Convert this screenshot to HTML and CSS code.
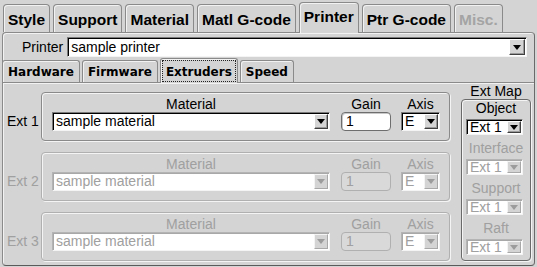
FILE: index.html
```html
<!DOCTYPE html>
<html>
<head>
<meta charset="utf-8">
<link rel="stylesheet" href="styles.css">
</head>
<body>
<div class="tabs">
  <div class="tab">Style</div>
  <div class="tab">Support</div>
  <div class="tab">Material</div>
  <div class="tab">Matl G-code</div>
  <div class="tab sel">Printer</div>
  <div class="tab">Ptr G-code</div>
  <div class="tab dis">Misc.</div>
</div>
<div class="panel">
  <div class="printer-row">
    <span class="plabel">Printer</span>
    <div class="combo wide"><span class="ctext">sample printer</span><span class="btn"><i class="tri"></i></span></div>
  </div>
  <div class="subtabs">
    <div class="stab">Hardware</div>
    <div class="stab">Firmware</div>
    <div class="stab sel"><span class="focus">Extruders</span></div>
    <div class="stab">Speed</div>
  </div>
  <div class="subpanel">
    <div class="extcol">
      <div class="extrow">
        <div class="extlabel">Ext 1</div>
        <div class="group">
          <div class="field mat"><div class="flabel">Material</div><div class="combo"><span class="ctext">sample material</span><span class="btn"><i class="tri"></i></span></div></div>
          <div class="field gain"><div class="flabel">Gain</div><div class="input">1</div></div>
          <div class="field axis"><div class="flabel">Axis</div><div class="combo"><span class="ctext">E</span><span class="btn"><i class="tri"></i></span></div></div>
        </div>
      </div>
      <div class="extrow dis">
        <div class="extlabel">Ext 2</div>
        <div class="group">
          <div class="field mat"><div class="flabel">Material</div><div class="combo"><span class="ctext">sample material</span><span class="btn"><i class="tri"></i></span></div></div>
          <div class="field gain"><div class="flabel">Gain</div><div class="input">1</div></div>
          <div class="field axis"><div class="flabel">Axis</div><div class="combo"><span class="ctext">E</span><span class="btn"><i class="tri"></i></span></div></div>
        </div>
      </div>
      <div class="extrow dis">
        <div class="extlabel">Ext 3</div>
        <div class="group">
          <div class="field mat"><div class="flabel">Material</div><div class="combo"><span class="ctext">sample material</span><span class="btn"><i class="tri"></i></span></div></div>
          <div class="field gain"><div class="flabel">Gain</div><div class="input">1</div></div>
          <div class="field axis"><div class="flabel">Axis</div><div class="combo"><span class="ctext">E</span><span class="btn"><i class="tri"></i></span></div></div>
        </div>
      </div>
    </div>
    <div class="mapcol">
      <div class="maplabel">Ext Map</div>
      <div class="mapbox">
        <div class="mapitem">
          <div class="mlabel">Object</div>
          <div class="combo small"><span class="ctext">Ext 1</span><span class="btn"><i class="tri"></i></span></div>
        </div>
        <div class="mapitem dis">
          <div class="mlabel">Interface</div>
          <div class="combo small"><span class="ctext">Ext 1</span><span class="btn"><i class="tri"></i></span></div>
        </div>
        <div class="mapitem dis">
          <div class="mlabel">Support</div>
          <div class="combo small"><span class="ctext">Ext 1</span><span class="btn"><i class="tri"></i></span></div>
        </div>
        <div class="mapitem dis">
          <div class="mlabel">Raft</div>
          <div class="combo small"><span class="ctext">Ext 1</span><span class="btn"><i class="tri"></i></span></div>
        </div>
      </div>
    </div>
  </div>
</div>
</body>
</html>
```
FILE: styles.css
```css
body {
  margin: 0;
  width: 537px;
  height: 267px;
  overflow: hidden;
  background: #d4d4d4;
  font-family: "Liberation Sans", Arial, sans-serif;
  font-size: 14px;
  color: #000;
}

.tabs {
  display: flex;
  align-items: flex-end;
  gap: 3px;
  height: 30px;
  margin-top: 2px;
  padding-left: 3px;
}

.tab {
  box-sizing: border-box;
  height: 28px;
  padding: 6px 4px 0;
  line-height: 18px;
  font-size: 15.5px;
  font-weight: bold;
  white-space: nowrap;
  background: #d4d4d4;
  border: 1px solid #8a8a8a;
  border-bottom: none;
  border-radius: 4px 4px 0 0;
  box-shadow: inset 1px 1px 0 #f2f2f2;
}

.tab.sel {
  height: 31px;
  padding-top: 5px;
  margin-bottom: -1px;
  position: relative;
  z-index: 1;
}

.tab.dis {
  color: #a4a4a4;
}

.panel {
  box-sizing: border-box;
  width: 533px;
  height: 234px;
  margin-left: 2px;
  border: 1px solid #8a8a8a;
  border-bottom-color: #5a5a5a;
  border-right-color: #6a6a6a;
  border-radius: 4px;
  box-shadow: inset 1px 1px 0 #f2f2f2;
}

.printer-row {
  display: flex;
  align-items: center;
  gap: 4px;
  padding: 4px 0 0 19px;
}

.plabel {
  line-height: 16px;
}

.combo {
  box-sizing: border-box;
  display: flex;
  height: 19px;
  background: #fff;
  border: 1px solid;
  border-color: #7a7a7a #f4f4f4 #f4f4f4 #7a7a7a;
  box-shadow: inset 1px 1px 0 #000;
}

.combo.wide {
  width: 460px;
  height: 20px;
}

.ctext {
  flex: 1;
  padding-left: 3px;
  line-height: 17px;
  white-space: nowrap;
  overflow: hidden;
}

.wide .ctext {
  line-height: 18px;
}

.btn {
  box-sizing: border-box;
  width: 14px;
  margin: 1px 1px 1px 0;
  display: flex;
  align-items: center;
  justify-content: center;
  background: #d4d4d4;
  border: 1px solid;
  border-color: #fff #404040 #404040 #fff;
  box-shadow: inset -1px -1px 0 #9a9a9a;
}

.wide .btn {
  width: 16px;
}

.tri {
  width: 0;
  height: 0;
  border-left: 4px solid transparent;
  border-right: 4px solid transparent;
  border-top: 5px solid #000;
}

.subtabs {
  display: flex;
  align-items: flex-end;
  gap: 2px;
  height: 24px;
  margin: 1px 0 0 -1px;
}

.stab {
  box-sizing: border-box;
  height: 22px;
  padding: 3px 5px 0;
  line-height: 16px;
  font-family: "DejaVu Sans", sans-serif;
  font-size: 12px;
  font-weight: bold;
  white-space: nowrap;
  background: #d4d4d4;
  border: 1px solid #8a8a8a;
  border-bottom: none;
  border-radius: 3px 3px 0 0;
  box-shadow: inset 1px 1px 0 #f2f2f2;
}

.stab.sel {
  height: 25px;
  padding: 1px 1px 0;
  margin-bottom: -1px;
  position: relative;
  z-index: 1;
}

.focus {
  display: block;
  padding: 3px 3px 1px;
  border: 1px dotted #222;
}

.subpanel {
  display: flex;
  padding-left: 4px;
  border-top: 1px solid #8a8a8a;
  box-shadow: inset 0 1px 0 #f2f2f2;
}

.extcol {
  display: flex;
  flex-direction: column;
  gap: 11px;
  padding-top: 9px;
}

.extrow {
  display: flex;
}

.extlabel {
  width: 34px;
  margin-top: 20px;
  line-height: 19px;
}

.group {
  box-sizing: border-box;
  display: flex;
  width: 409px;
  height: 49px;
  padding: 3px 0 0 10px;
  border: 1px solid #8a8a8a;
  border-radius: 4px;
  box-shadow: inset 1px 1px 0 #f4f4f4, 1px 1px 0 #f4f4f4;
}

.field {
  display: flex;
  flex-direction: column;
}

.flabel {
  line-height: 16px;
  text-align: center;
}

.mat { width: 278px; }
.gain { width: 50px; margin-left: 11px; }
.axis { width: 39px; margin-left: 10px; }

.input {
  box-sizing: border-box;
  height: 19px;
  padding-left: 4px;
  line-height: 17px;
  background: #fff;
  border: 1px solid #6e6e6e;
  border-radius: 4px;
  box-shadow: inset 1px 1px 0 #c8c8c8;
}

.dis {
  color: #a0a0a0;
}

.dis .group {
  border-color: #b0b0b0;
}

.dis .combo {
  border-color: #b4b4b4 #f4f4f4 #f4f4f4 #b4b4b4;
  box-shadow: inset 1px 1px 0 #a8a8a8;
}

.dis .btn {
  border-color: #f4f4f4 #a8a8a8 #a8a8a8 #f4f4f4;
  box-shadow: none;
}

.dis .tri {
  border-top-color: #9c9c9c;
}

.dis .input {
  background: #d9d9d9;
  border-color: #b0b0b0;
  box-shadow: none;
}

.mapcol {
  display: flex;
  flex-direction: column;
  width: 70px;
  margin-left: 11px;
}

.maplabel {
  line-height: 16px;
  text-align: center;
}

.mapbox {
  box-sizing: border-box;
  height: 162px;
  padding: 0 4px;
  border: 1px solid #6a6a6a;
  border-radius: 4px;
  box-shadow: inset 1px 1px 0 #f4f4f4, 1px 1px 0 #f4f4f4;
}

.mapitem {
  display: flex;
  flex-direction: column;
}

.mlabel {
  line-height: 17px;
  text-align: center;
}

.combo.small {
  width: 57px;
  height: 16px;
  margin: 2px 0 5px;
}

.small .ctext {
  line-height: 14px;
}

.small .btn {
  width: 14px;
}
```
